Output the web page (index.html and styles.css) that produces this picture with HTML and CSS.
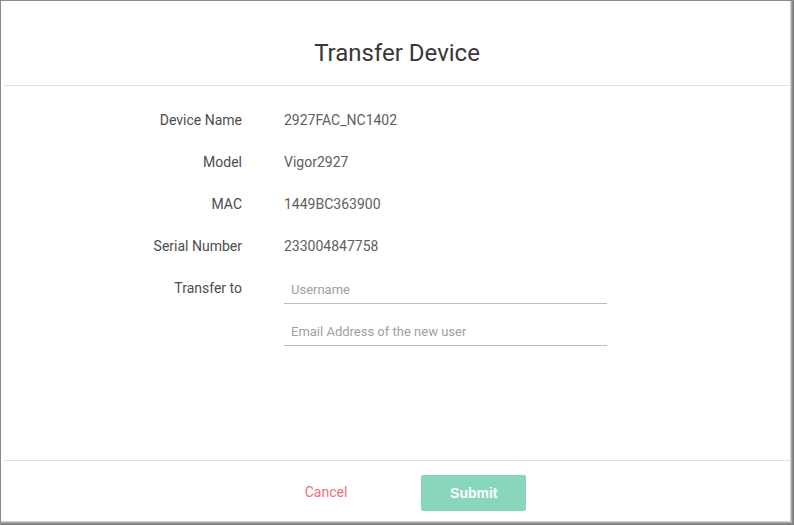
FILE: index.html
```html
<!DOCTYPE html>
<html>
<head>
<meta charset="utf-8">
<link rel="stylesheet" href="styles.css">
</head>
<body>
<div class="window">
  <div class="header"><h1 class="title">Transfer Device</h1></div>
  <div class="content">
    <div class="form">
      <div class="label">Device Name</div><div class="value">2927FAC_NC1402</div>
      <div class="label">Model</div><div class="value">Vigor2927</div>
      <div class="label">MAC</div><div class="value">1449BC363900</div>
      <div class="label">Serial Number</div><div class="value">233004847758</div>
      <div class="label">Transfer to</div>
      <div class="inputs">
        <input class="field" type="text" placeholder="Username">
        <input class="field" type="text" placeholder="Email Address of the new user">
      </div>
    </div>
  </div>
  <div class="footer">
    <span class="cancel">Cancel</span>
    <button class="submit" type="button">Submit</button>
  </div>
</div>
</body>
</html>
```
FILE: styles.css
```css
html, body { margin: 0; padding: 0; background: #fff; }
body { font-family: Roboto, "Liberation Sans", sans-serif; }
.window {
  width: 794px;
  height: 525px;
  box-sizing: border-box;
  border-top: 1px solid #8a8a8a;
  border-left: 1px solid #8a8a8a;
  box-shadow: inset -1px -1px 0 #7a7a7a, inset -2px -2px 0 #8c8c8c, inset -3px -3px 0 #a8a8a8, inset -4px -4px 0 #d0d0d0;
  padding: 0 4px 4px 0;
  display: flex;
  flex-direction: column;
  background: #fff;
}
.header {
  margin-left: 3px;
  padding: 38px 0 18px;
  border-bottom: 1px solid #e0e0e0;
  text-align: center;
}
.title {
  margin: 0;
  font-size: 24px;
  line-height: 28px;
  font-weight: 400;
  color: #383838;
}
.content {
  flex: 1;
  padding-top: 13px;
}
.form {
  display: grid;
  grid-template-columns: 241px 323px;
  column-gap: 42px;
  font-size: 14px;
}
.label {
  text-align: right;
  line-height: 42px;
  color: #4d4d4d;
}
.value {
  line-height: 42px;
  color: #606060;
}
.inputs {
  display: flex;
  flex-direction: column;
  gap: 12px;
  padding-top: 7px;
}
.field {
  height: 30px;
  box-sizing: border-box;
  border: none;
  border-bottom: 1px solid #bdbdbd;
  padding: 2px 7px 0;
  font-family: Roboto, "Liberation Sans", sans-serif;
  font-size: 13px;
  color: #333;
  outline: none;
  background: transparent;
}
.field::placeholder { color: #a0a0a0; }
.footer {
  margin-left: 3px;
  border-top: 1px solid #dde0e6;
  padding: 14px 0 10px 37px;
  display: flex;
  justify-content: center;
  align-items: center;
  gap: 74px;
}
.cancel {
  font-size: 14px;
  color: #ec6f82;
  margin-top: -3px;
}
.submit {
  width: 105px;
  height: 36px;
  border: none;
  border-radius: 2px;
  background: #88d7bd;
  color: #fff;
  font-family: "Liberation Sans", Arial, sans-serif;
  font-weight: 700;
  font-size: 14px;
  padding: 0;
}
```
